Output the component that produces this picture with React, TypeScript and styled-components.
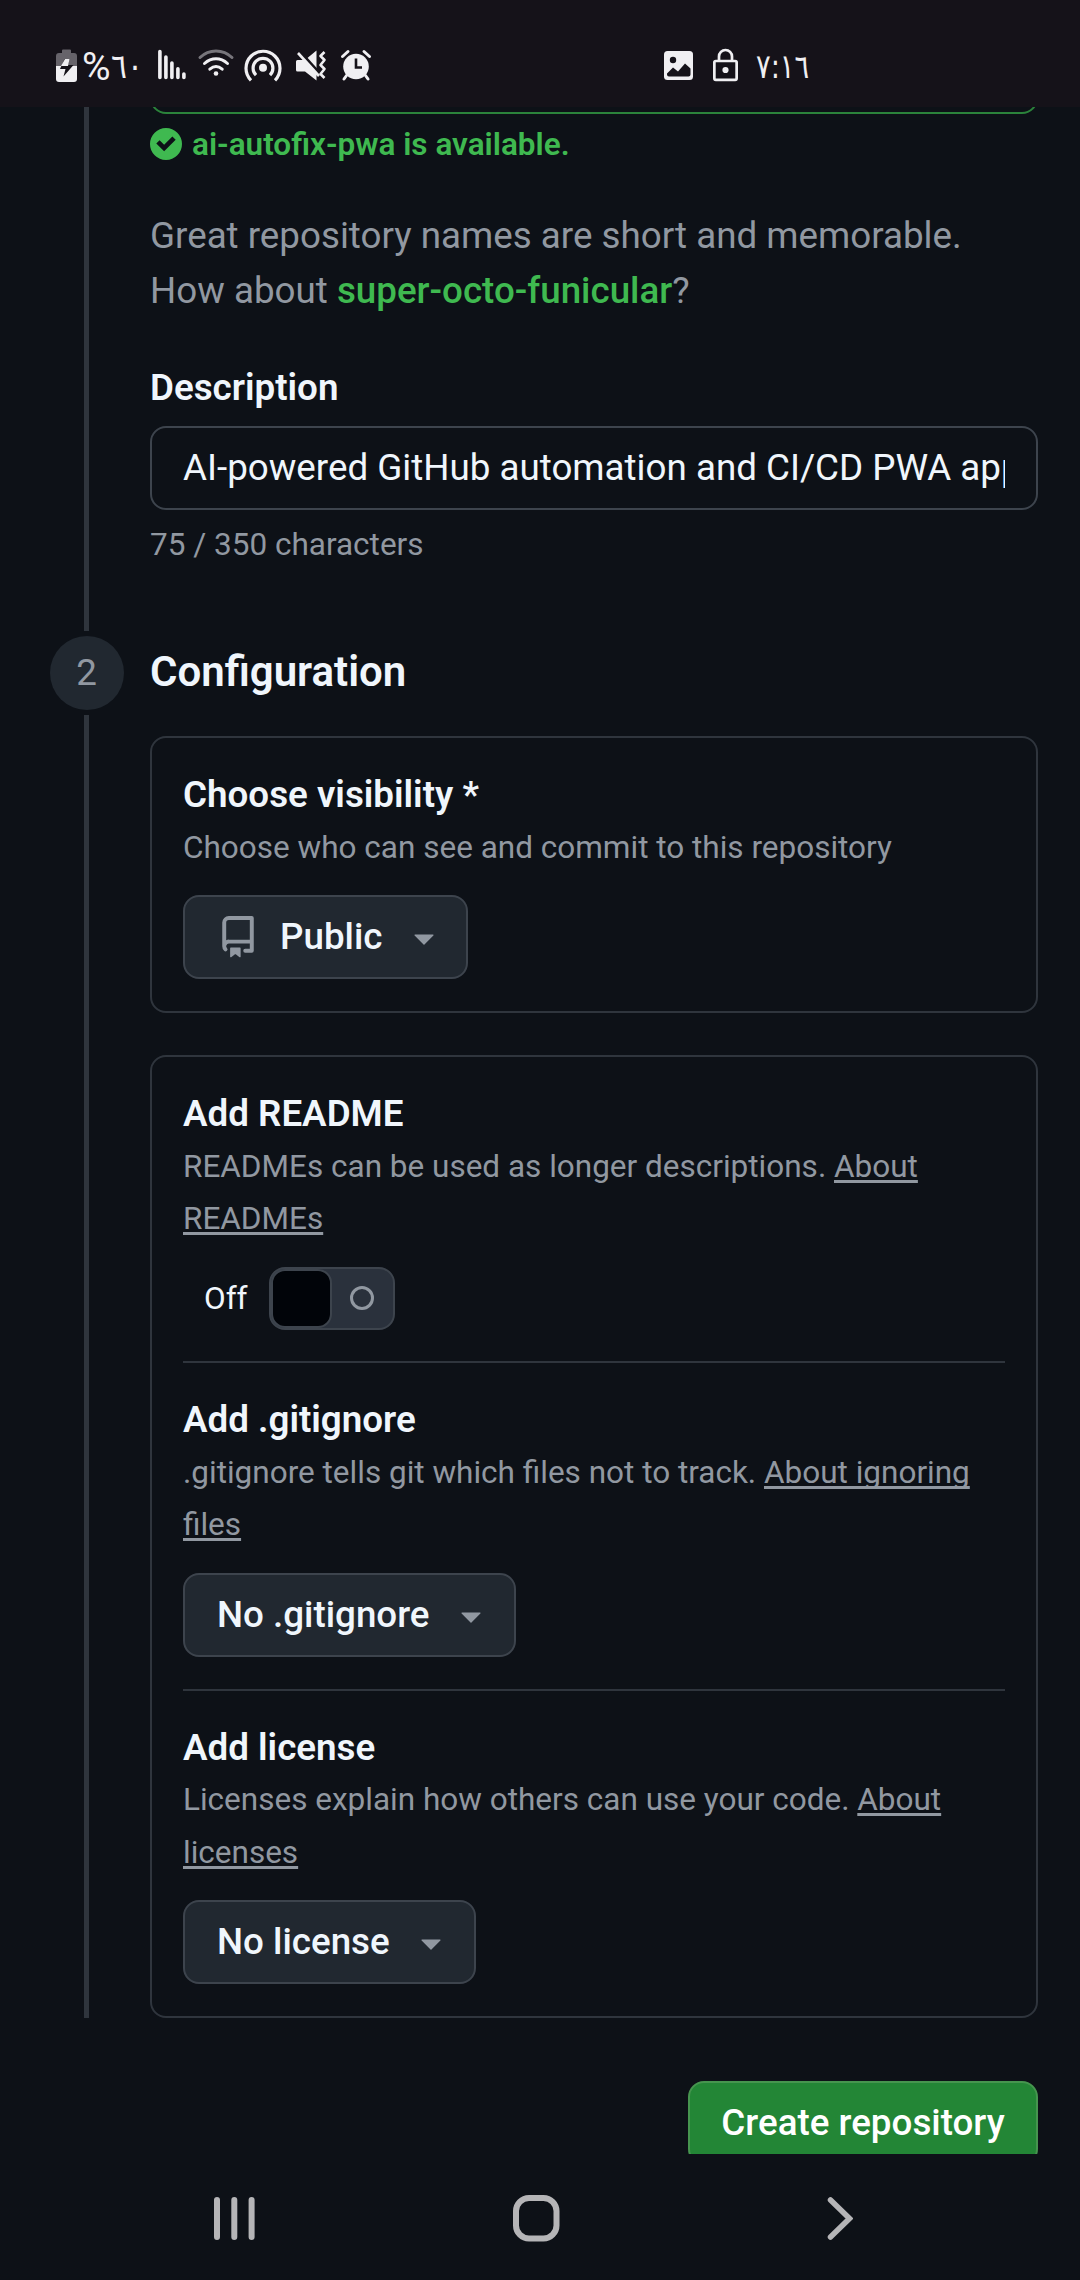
import React from "react";
import styled, { createGlobalStyle } from "styled-components";

const GlobalStyle = createGlobalStyle`
  *, *::before, *::after { box-sizing: border-box; }
  body {
    margin: 0;
    background: #0d1117;
    font-family: Roboto, "Noto Sans", sans-serif;
    color: #f0f6fc;
  }
`;

const color = {
  page: "#0d1117",
  text: "#f0f6fc",
  muted: "#9198a1",
  cardBorder: "#2f353d",
  controlBorder: "#3d444d",
  control: "#212830",
  green: "#3fb950",
};

const Screen = styled.div`
  display: flex;
  flex-direction: column;
  width: 1080px;
  height: 2280px;
  overflow: hidden;
  background: ${color.page};
`;

/* ---------- status bar ---------- */

const StatusBar = styled.header`
  display: flex;
  align-items: flex-start;
  flex: none;
  height: 107px;
  padding: 48px 0 0 56px;
  background: #151219;
`;

const StatusSlot = styled.div<{ $width: number; $gap: number }>`
  display: flex;
  flex: none;
  width: ${(p) => p.$width}px;
  height: 36px;
  margin-right: ${(p) => p.$gap}px;
  svg { display: block; overflow: visible; }
`;

const StatusText = styled.span<{ $size: number; $stretch: number }>`
  font-family: "DejaVu Sans", sans-serif;
  font-size: ${(p) => p.$size}px;
  line-height: 36px;
  letter-spacing: -2px;
  color: #f0eff2;
  white-space: nowrap;
  transform: scale(${(p) => p.$stretch}, 1.08);
  transform-origin: left center;
`;

const Percent = styled.span`
  font-family: Roboto, sans-serif;
  font-size: 39px;
  line-height: 39px;
  color: #f0eff2;
`;

const ink = "#f0eff2";

const BatteryIcon = () => (
  <svg width="21" height="36" viewBox="0 0 21 36">
    <path d="M6 2.500a1 1 0 0 1 1-1h7a1 1 0 0 1 1 1V5h3a3 3 0 0 1 3 3v10H0V8a3 3 0 0 1 3-3h3Z" fill="#66636a" />
    <path d="M0 18h21v13a3 3 0 0 1-3 3H3a3 3 0 0 1-3-3Z" fill={ink} />
    <path d="M8.500 11h5L12 17h5.500L7.500 28.500 9.500 21H4Z" fill="#151219" />
    <path d="M9 11h4.500L12 18H5Z" fill={ink} />
  </svg>
);

const SignalIcon = () => (
  <svg width="28" height="36" viewBox="0 0 28 36" stroke={ink} strokeWidth="3.600" strokeLinecap="round">
    <path d="M1.900 3.500V29.500M7.900 9V29.500M13.900 15V29.500M19.900 20.800V29.500M25.900 26V29.500" />
  </svg>
);

const WifiIcon = () => (
  <svg width="36" height="36" viewBox="0 0 36 36" fill="none" strokeLinecap="round" strokeWidth="3">
    <path d="M2 9.500C11 .8 25 .8 34 9.500" stroke="#77757b" />
    <path d="M6.500 15.500C13.500 9.200 22.500 9.200 29.500 15.500" stroke={ink} />
    <path d="M11.800 21.200C15.800 17.800 20.200 17.800 24.200 21.200" stroke={ink} />
    <circle cx="18" cy="25.500" r="2.300" fill={ink} />
  </svg>
);

const HotspotIcon = () => (
  <svg width="38" height="36" viewBox="0 0 38 36" fill="none" stroke={ink} strokeWidth="3.200">
    <path d="M7 32.300A17 17 0 1 1 31 32.300" />
    <path d="M12 27.200A9.900 9.900 0 1 1 26 27.200" />
    <circle cx="19" cy="19.700" r="4" fill={ink} stroke="none" />
  </svg>
);

const MuteVibrateIcon = () => (
  <svg width="30" height="36" viewBox="0 0 30 36" fill="none">
    <path d="M0 13.500a1.500 1.500 0 0 1 1.500-1.500H9L20.500 2.500V32.500L9 23.500H1.500A1.500 1.500 0 0 1 0 22Z" fill={ink} />
    <path d="M3 2.500 25 27" stroke="#151219" strokeWidth="3" />
    <path d="M2 5 23 28" stroke={ink} strokeWidth="2.600" />
    <path d="m28.500 4-4 4 4 4-4 5 4 4-4 5 4 4" stroke={ink} strokeWidth="2.600" strokeLinejoin="round" />
  </svg>
);

const AlarmIcon = () => (
  <svg width="30" height="36" viewBox="0 0 30 36" fill="none">
    <circle cx="15" cy="18.500" r="12.800" fill={ink} />
    <path d="M1.500 8.500 7 3.500M28.500 8.500 23 3.500M5.500 27.500 3 31M24.500 27.500 27 31" stroke={ink} strokeWidth="3" strokeLinecap="round" />
    <path d="M15 10.500V19.500H21" stroke="#151219" strokeWidth="2.600" />
  </svg>
);

const PictureIcon = () => (
  <svg width="29" height="36" viewBox="0 0 29 36">
    <rect y="3" width="29" height="29" rx="3.500" fill={ink} />
    <circle cx="9" cy="12" r="3.200" fill="#151219" />
    <path d="M3 25.500 9 19.500l5 4L21 15.500l5.500 5V26.500a2 2 0 0 1-2 2H5a2 2 0 0 1-2-2Z" fill="#151219" />
  </svg>
);

const LockIcon = () => (
  <svg width="25" height="36" viewBox="0 0 25 36" fill="none" stroke={ink} strokeWidth="2.700">
    <rect x="1.350" y="13" width="22.300" height="18.800" rx="1.500" />
    <path d="M6 13V8.500a6.500 6.500 0 0 1 13 0V13" />
    <circle cx="12.500" cy="22" r="3.100" fill={ink} stroke="none" />
  </svg>
);

/* ---------- page ---------- */

const Viewport = styled.main`
  flex: none;
  height: 2047px;
  overflow: hidden;
`;

const Step = styled.section<{ $height: number }>`
  display: grid;
  grid-template-columns: 74px 888px;
  column-gap: 26px;
  height: ${(p) => p.$height}px;
  padding-left: 50px;
`;

const Rail = styled.div`
  display: flex;
  flex-direction: column;
  align-items: center;
  gap: 5px;
`;

const RailLine = styled.div`
  flex: 1;
  width: 5px;
  margin-right: 1px;
  background: ${color.cardBorder};
`;

const StepBadge = styled.div`
  display: flex;
  align-items: center;
  justify-content: center;
  flex: none;
  width: 74px;
  height: 74px;
  padding: 0 1px 1px 0;
  border-radius: 50%;
  background: ${color.control};
  color: ${color.muted};
  font-size: 36.75px;
`;

const Column = styled.div`
  display: flex;
  flex-direction: column;
  min-width: 0;
`;

const NameFieldEdge = styled.div`
  flex: none;
  height: 84px;
  margin-top: -77px;
  border: 2px solid #2b833b;
  border-radius: 16px;
`;

const Availability = styled.div`
  display: flex;
  align-items: center;
  gap: 10px;
  height: 48px;
  margin-top: 6px;
  color: ${color.green};
  font-size: 31.5px;
  font-weight: 600;
  white-space: nowrap;
  svg { flex: none; display: block; }
`;

const Hint = styled.p`
  margin: 40px 0 0;
  color: ${color.muted};
  font-size: 36.75px;
  line-height: 55px;
  white-space: nowrap;
`;

const Suggestion = styled.span`
  color: ${color.green};
  font-weight: 500;
`;

const FieldLabel = styled.label`
  margin-top: 46px;
  font-size: 36.75px;
  font-weight: 600;
  line-height: 48px;
`;

const Input = styled.div`
  height: 84px;
  margin-top: 14px;
  padding: 0 31px;
  border: 2px solid ${color.controlBorder};
  border-radius: 16px;
  font-size: 36.75px;
  line-height: 80px;
`;

const InputValue = styled.div`
  overflow: hidden;
  white-space: nowrap;
`;

const Counter = styled.div`
  margin-top: 11px;
  color: ${color.muted};
  font-size: 31.5px;
  line-height: 48px;
`;

const StepTitle = styled.h2`
  margin: 0;
  height: 100px;
  font-size: 42px;
  font-weight: 600;
  line-height: 72px;
`;

const Card = styled.div<{ $height: number; $gap?: number }>`
  flex: none;
  height: ${(p) => p.$height}px;
  margin-bottom: ${(p) => p.$gap ?? 0}px;
  padding: 0 31px;
  border: 2px solid ${color.cardBorder};
  border-radius: 16px;
`;

const Setting = styled.div`
  display: flex;
  flex-direction: column;
  align-items: flex-start;
  padding: 31px 0 31.9px;
  & + & { border-top: 2px solid ${color.cardBorder}; }
`;

const SettingTitle = styled.div`
  margin-bottom: 1.5px;
  font-size: 36.75px;
  font-weight: 600;
  line-height: 51px;
`;

const SettingText = styled.div`
  margin-bottom: 21px;
  color: ${color.muted};
  font-size: 31.5px;
  line-height: 52.5px;
`;

const Link = styled.a`
  color: inherit;
  text-decoration: underline;
  text-decoration-thickness: 2.6px;
  text-underline-offset: 3px;
  text-decoration-skip-ink: none;
`;

const SelectButton = styled.button`
  display: flex;
  align-items: center;
  gap: 20.5px;
  height: 84px;
  margin: 0;
  padding: 0 21px 0 32px;
  border: 2px solid ${color.controlBorder};
  border-radius: 16px;
  background: ${color.control};
  color: ${color.text};
  font: 500 36.75px/80px Roboto, sans-serif;
  white-space: nowrap;
  svg { display: block; flex: none; fill: ${color.muted}; }
  svg:first-child { margin-right: 0.5px; }
`;

const ToggleRow = styled.div`
  display: flex;
  align-items: center;
  gap: 21px;
  padding-left: 21px;
  font-size: 31.5px;
`;

const Track = styled.div`
  display: flex;
  width: 126px;
  height: 63px;
  border: 2px solid ${color.controlBorder};
  border-radius: 16px;
  background: #2a313c;
`;

const Knob = styled.div`
  width: 61px;
  height: 59px;
  border: 2px solid ${color.controlBorder};
  border-radius: 14px;
  background: #010409;
`;

const TrackMark = styled.div`
  display: flex;
  flex: 1;
  align-items: center;
  justify-content: center;
`;

const Ring = styled.div`
  width: 24px;
  height: 24px;
  border: 3px solid ${color.muted};
  border-radius: 50%;
`;

const Actions = styled.div`
  display: flex;
  justify-content: flex-end;
  padding: 63px 42px 0 0;
`;

const CreateButton = styled.button`
  width: 350px;
  height: 84px;
  padding: 0;
  border: 2px solid #46954f;
  border-radius: 16px;
  background: #238636;
  color: #fff;
  font: 500 36.75px/76px Roboto, sans-serif;
  white-space: nowrap;
`;

/* ---------- system navigation ---------- */

const NavBar = styled.nav`
  display: grid;
  grid-template-columns: 299px 311px 28px;
  align-items: center;
  flex: 1;
  padding: 1px 0 0 213px;
  svg { display: block; }
`;

const Caret = () => (
  <svg width="42" height="42" viewBox="0 0 16 16">
    <path d="m4.427 7.427 3.396 3.396a.25.25 0 0 0 .354 0l3.396-3.396A.25.25 0 0 0 11.396 7H4.604a.25.25 0 0 0-.177.427Z" />
  </svg>
);

const RepoIcon = () => (
  <svg width="42" height="42" viewBox="0 0 16 16">
    <path d="M2 2.500A2.500 2.500 0 0 1 4.500 0h8.750a.75.75 0 0 1 .75.75v12.500a.75.75 0 0 1-.75.75h-2.500a.75.75 0 0 1 0-1.500h1.750v-2h-8a1 1 0 0 0-.714 1.700.75.75 0 1 1-1.072 1.050A2.495 2.495 0 0 1 2 11.500Zm10.500-1h-8a1 1 0 0 0-1 1v6.708A2.486 2.486 0 0 1 4.500 9h8ZM5 12.250a.25.25 0 0 1 .25-.25h3.500a.25.25 0 0 1 .25.25v3.250a.25.25 0 0 1-.4.2l-1.450-1.087a.249.249 0 0 0-.3 0L5.400 15.700a.25.25 0 0 1-.4-.2Z" />
  </svg>
);

const CheckIcon = () => (
  <svg width="32" height="32" viewBox="0 0 12 12">
    <path
      fill={color.green}
      d="M6 0a6 6 0 1 1 0 12A6 6 0 0 1 6 0Zm-.705 8.737L9.630 4.403 8.392 3.166 5.295 6.263l-1.700-1.702L2.356 5.800l2.938 2.938Z"
    />
  </svg>
);

export default function App() {
  return (
    <>
      <GlobalStyle />
      <Screen>
        <StatusBar>
          <StatusSlot $width={21} $gap={5}><BatteryIcon /></StatusSlot>
          <StatusSlot $width={28} $gap={1}><Percent>%</Percent></StatusSlot>
          <StatusSlot $width={30} $gap={17}><StatusText $size={32} $stretch={0.93}>٦٠</StatusText></StatusSlot>
          <StatusSlot $width={28} $gap={12}><SignalIcon /></StatusSlot>
          <StatusSlot $width={36} $gap={10}><WifiIcon /></StatusSlot>
          <StatusSlot $width={38} $gap={14}><HotspotIcon /></StatusSlot>
          <StatusSlot $width={30} $gap={15}><MuteVibrateIcon /></StatusSlot>
          <StatusSlot $width={30} $gap={293}><AlarmIcon /></StatusSlot>
          <StatusSlot $width={29} $gap={20}><PictureIcon /></StatusSlot>
          <StatusSlot $width={25} $gap={18}><LockIcon /></StatusSlot>
          <StatusSlot $width={60} $gap={0}><StatusText $size={31} $stretch={0.88}>٧:١٦</StatusText></StatusSlot>
        </StatusBar>

        <Viewport>
          <Step $height={529}>
            <Rail><RailLine /><div /></Rail>
            <Column>
              <NameFieldEdge />
              <Availability><CheckIcon />ai-autofix-pwa is available.</Availability>
              <Hint>
                Great repository names are short and memorable.<br />
                How about <Suggestion>super-octo-funicular</Suggestion>?
              </Hint>
              <FieldLabel>Description</FieldLabel>
              <Input><InputValue>AI-powered GitHub automation and CI/CD PWA application</InputValue></Input>
              <Counter>75 / 350 characters</Counter>
            </Column>
          </Step>

          <Step $height={1382}>
            <Rail><StepBadge>2</StepBadge><RailLine /></Rail>
            <Column>
              <StepTitle>Configuration</StepTitle>
              <Card $height={277} $gap={42}>
                <Setting>
                  <SettingTitle>Choose visibility *</SettingTitle>
                  <SettingText>Choose who can see and commit to this repository</SettingText>
                  <SelectButton><RepoIcon />Public<Caret /></SelectButton>
                </Setting>
              </Card>
              <Card $height={963}>
                <Setting>
                  <SettingTitle>Add README</SettingTitle>
                  <SettingText>READMEs can be used as longer descriptions. <Link>About READMEs</Link></SettingText>
                  <ToggleRow>
                    Off
                    <Track><Knob /><TrackMark><Ring /></TrackMark></Track>
                  </ToggleRow>
                </Setting>
                <Setting>
                  <SettingTitle>Add .gitignore</SettingTitle>
                  <SettingText>.gitignore tells git which files not to track. <Link>About ignoring files</Link></SettingText>
                  <SelectButton>No .gitignore<Caret /></SelectButton>
                </Setting>
                <Setting>
                  <SettingTitle>Add license</SettingTitle>
                  <SettingText>Licenses explain how others can use your code. <Link>About licenses</Link></SettingText>
                  <SelectButton>No license<Caret /></SelectButton>
                </Setting>
              </Card>
            </Column>
          </Step>

          <Actions><CreateButton>Create repository</CreateButton></Actions>
        </Viewport>

        <NavBar>
          <svg width="42" height="48" viewBox="0 0 42 48" stroke="#b5b5b7" strokeWidth="6" strokeLinecap="round">
            <path d="M4 6V43M21.300 6V43M38.600 6V43" />
          </svg>
          <svg width="48" height="48" viewBox="0 0 48 48" fill="none" stroke="#b5b5b7" strokeWidth="6">
            <rect x="4" y="4" width="40.500" height="40.500" rx="13" />
          </svg>
          <svg width="30" height="48" viewBox="0 0 30 48" fill="none" stroke="#b5b5b7" strokeWidth="5.500" strokeLinecap="round">
            <path d="M7.500 6 26.500 24.500 7.500 43" />
          </svg>
        </NavBar>
      </Screen>
    </>
  );
}
